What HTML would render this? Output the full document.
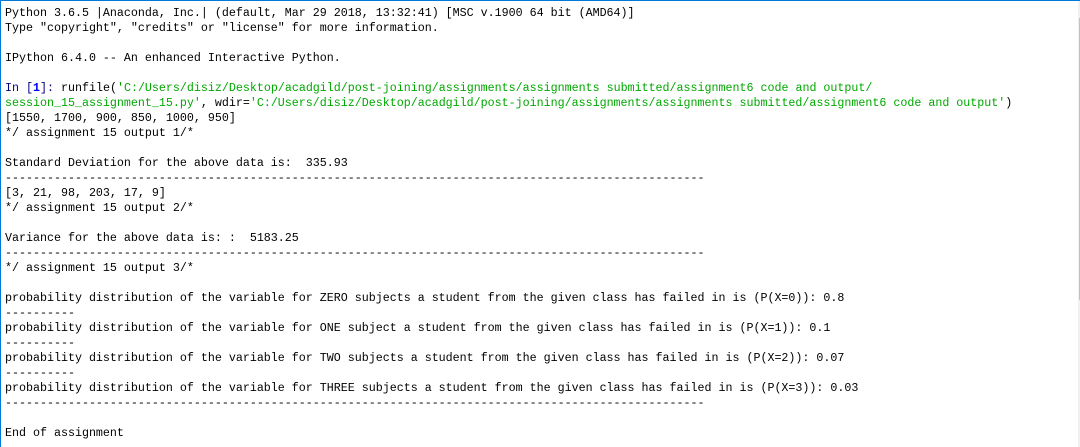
<!DOCTYPE html>
<html><head><meta charset="utf-8"><style>
html,body{margin:0;padding:0;background:#fff;width:1080px;height:447px;overflow:hidden;position:relative}
.top{position:absolute;left:0;top:0;width:1080px;height:1px;background:#0078d7}
.left{position:absolute;left:0;top:0;width:1px;height:447px;background:#0078d7}
.sb{position:absolute;left:1078px;top:1px;width:2px;height:446px;background:#f0f0f0}
.th{position:absolute;left:1079px;top:18px;width:1px;height:282px;background:#c2c2c2}
pre{position:absolute;left:5px;top:6px;margin:0;font-family:"Liberation Mono",monospace;font-size:11.67px;line-height:15px;color:#000}
.g{color:#00a800}.n{color:#000080}.b{color:#0000ff;font-weight:bold}
</style></head><body>
<div class="top"></div><div class="left"></div><div class="sb"></div><div class="th"></div>
<pre>Python 3.6.5 |Anaconda, Inc.| (default, Mar 29 2018, 13:32:41) [MSC v.1900 64 bit (AMD64)]
Type "copyright", "credits" or "license" for more information.

IPython 6.4.0 -- An enhanced Interactive Python.

<span class="n">In [</span><span class="b">1</span><span class="n">]:</span> runfile(<span class="g">'C:/Users/disiz/Desktop/acadgild/post-joining/assignments/assignments submitted/assignment6 code and output/</span>
<span class="g">session_15_assignment_15.py'</span>, wdir=<span class="g">'C:/Users/disiz/Desktop/acadgild/post-joining/assignments/assignments submitted/assignment6 code and output'</span>)
[1550, 1700, 900, 850, 1000, 950]
*/ assignment 15 output 1/*

Standard Deviation for the above data is:  335.93
----------------------------------------------------------------------------------------------------
[3, 21, 98, 203, 17, 9]
*/ assignment 15 output 2/*

Variance for the above data is: :  5183.25
----------------------------------------------------------------------------------------------------
*/ assignment 15 output 3/*

probability distribution of the variable for ZERO subjects a student from the given class has failed in is (P(X=0)): 0.8
----------
probability distribution of the variable for ONE subject a student from the given class has failed in is (P(X=1)): 0.1
----------
probability distribution of the variable for TWO subjects a student from the given class has failed in is (P(X=2)): 0.07
----------
probability distribution of the variable for THREE subjects a student from the given class has failed in is (P(X=3)): 0.03
----------------------------------------------------------------------------------------------------

End of assignment</pre>
</body></html>
